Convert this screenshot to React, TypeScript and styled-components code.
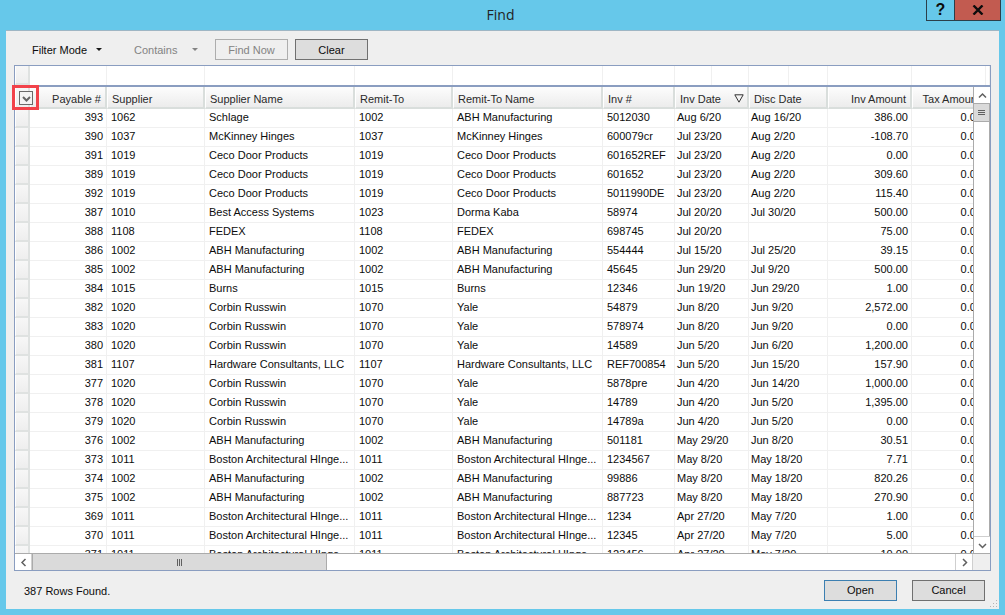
import styled, { createGlobalStyle } from "styled-components";

const GlobalStyle = createGlobalStyle`
  html, body {
    margin: 0;
    padding: 0;
    background: #66c8ea;
    font-family: "Liberation Sans", Arial, sans-serif;
    font-size: 11px;
    color: #0c0c0c;
  }
`;

// column widths, row header first
const COLUMNS = "15px 77px 98px 150px 98px 150px 72px 74px 79px 84px 74px";
const FILTER_COLUMNS = "15px 77px 98px 150px 98px 150px 72px 37px 37px 40px 39px 84px 74px 1fr";

const Window = styled.div`
  width: 1005px;
  height: 615px;
  display: flex;
  flex-direction: column;
  overflow: hidden;
`;

const TitleBar = styled.div`
  height: 30px;
  flex: none;
  display: grid;
  grid-template-columns: 1fr auto 1fr;
  padding-right: 4px;
`;

const Title = styled.div`
  grid-column: 2;
  font-family: "Open Sans", sans-serif;
  font-size: 14px;
  line-height: 29px;
  color: #222;
`;

const CaptionButtons = styled.div`
  grid-column: 3;
  justify-self: end;
  display: flex;
  height: 21px;
`;

const CaptionButton = styled.div<{ $close?: boolean }>`
  box-sizing: border-box;
  width: ${(p) => (p.$close ? "47px" : "29px")};
  height: 21px;
  margin-left: ${(p) => (p.$close ? "-1px" : "0")};
  display: flex;
  align-items: center;
  justify-content: center;
  border: 1px solid #2b3f4a;
  border-top: none;
  background: ${(p) => (p.$close ? "#c25b50" : "transparent")};
  font-size: 16px;
  font-weight: bold;
  color: #0c0c0c;
`;

const Client = styled.div`
  flex: 1;
  margin: 0 6px 6px;
  background: #efefef;
  border-top: 1px solid #9fb6c4;
  display: flex;
  flex-direction: column;
  padding: 0 8px;
  position: relative;
`;

const Toolbar = styled.div`
  height: 34px;
  flex: none;
  display: flex;
  align-items: center;
  padding: 3px 0 0 18px;
  box-sizing: border-box;
`;

const ToolLabel = styled.div<{ $disabled?: boolean; $width: number }>`
  width: ${(p) => p.$width}px;
  display: flex;
  align-items: center;
  color: ${(p) => (p.$disabled ? "#838383" : "#0c0c0c")};
`;

const Caret = styled.span<{ $disabled?: boolean; $gap: number }>`
  width: 0;
  height: 0;
  margin-left: ${(p) => p.$gap}px;
  border-left: 3px solid transparent;
  border-right: 3px solid transparent;
  border-top: 3px solid ${(p) => (p.$disabled ? "#838383" : "#1a1a1a")};
`;

const ToolButton = styled.div<{ $disabled?: boolean }>`
  box-sizing: border-box;
  width: 73px;
  height: 21px;
  margin-right: 7px;
  display: flex;
  align-items: center;
  justify-content: center;
  border: 1px solid ${(p) => (p.$disabled ? "#adadad" : "#707070")};
  background: ${(p) => (p.$disabled ? "#efefef" : "#dddddd")};
  color: ${(p) => (p.$disabled ? "#838383" : "#0c0c0c")};
`;

const GridBox = styled.div`
  box-sizing: border-box;
  height: 506px;
  flex: none;
  border: 1px solid #8a9dc0;
  background: #fff;
  position: relative;
  display: flex;
  flex-direction: column;
`;

const FilterRow = styled.div`
  height: 19px;
  flex: none;
  display: grid;
  grid-template-columns: ${FILTER_COLUMNS};
  border-bottom: 2px solid #8a9dc0;
`;

const FilterCell = styled.div`
  border-right: 1px solid #f0f0f0;
`;

const RowHead = styled.div`
  box-sizing: border-box;
  background: linear-gradient(#f7f7f7, #eeeeee);
  border-left: 1px solid #fff;
  border-right: 2px solid #dfe2e1;
  border-bottom: 2px solid #dfe2e1;
`;

const Middle = styled.div`
  flex: 1;
  min-height: 0;
  display: flex;
`;

const MainPane = styled.div`
  width: 958px;
  overflow: hidden;
  display: flex;
  flex-direction: column;
`;

const HeaderRow = styled.div`
  height: 22px;
  flex: none;
  display: grid;
  grid-template-columns: ${COLUMNS};
`;

const HeaderCorner = styled(RowHead)`
  display: flex;
  align-items: center;
  justify-content: center;
`;

const SelectBox = styled.div`
  box-sizing: border-box;
  position: relative;
  z-index: 1;
  flex: none;
  width: 14px;
  height: 14px;
  margin: 1px 0 0 8px;
  border: 1px solid #6a6a6a;
  background: #f4f4f4;
  display: flex;
  align-items: center;
  justify-content: center;
  padding-top: 2px;
`;

const HeaderCell = styled.div<{ $right?: boolean }>`
  box-sizing: border-box;
  position: relative;
  display: flex;
  align-items: center;
  justify-content: ${(p) => (p.$right ? "flex-end" : "flex-start")};
  padding: 3px ${(p) => (p.$right ? "4px" : "0")} 0 ${(p) => (p.$right ? "0" : "4px")};
  background: linear-gradient(#fdfdfd, #ececec);
  border-left: 1px solid #fff;
  border-right: 2px solid #d9dedc;
  border-bottom: 2px solid #d9dedc;
  color: #2a2a2a;
  white-space: nowrap;
`;

const SortMark = styled.svg`
  position: absolute;
  right: 3px;
  top: 7px;
`;

const Rows = styled.div`
  flex: 1;
  min-height: 0;
  overflow: hidden;
`;

const Row = styled.div`
  height: 19px;
  display: grid;
  grid-template-columns: ${COLUMNS};
`;

const Cell = styled.div<{ $right?: boolean; $date?: boolean }>`
  box-sizing: border-box;
  line-height: 17px;
  padding: 0 ${(p) => (p.$right ? "3px" : "0")} 0 ${(p) => (p.$right ? "0" : p.$date ? "2px" : "4px")};
  text-align: ${(p) => (p.$right ? "right" : "left")};
  border-right: 1px solid #f0f0f0;
  border-bottom: 1px solid #f0f0f0;
  white-space: nowrap;
  overflow: hidden;
`;

const VScroll = styled.div`
  width: 17px;
  flex: none;
  box-sizing: border-box;
  border-left: 1px solid #ababab;
  border-right: 1px solid #ababab;
  display: flex;
  flex-direction: column;
  background: #fff;
`;

const ArrowButton = styled.div<{ $edge?: "top" | "bottom" | "left" | "right" }>`
  flex: none;
  width: 16px;
  height: 16px;
  display: flex;
  align-items: center;
  justify-content: center;
  background: #fff;
  ${(p) => (p.$edge === "bottom" ? "border-top: 1px solid #cfcfcf; margin-top: auto;" : "")}
  ${(p) => (p.$edge === "left" ? "border-right: 1px solid #cfcfcf;" : "")}
  ${(p) => (p.$edge === "right" ? "border-left: 1px solid #cfcfcf; border-right: 1px solid #cfcfcf; margin-left: auto;" : "")}
`;

const VThumb = styled.div`
  box-sizing: border-box;
  flex: none;
  height: 19px;
  background: #dadada;
  border-top: 1px solid #ababab;
  border-bottom: 1px solid #ababab;
  display: flex;
  flex-direction: column;
  align-items: center;
  justify-content: center;
  gap: 1px;
`;

const GripLine = styled.span`
  width: 7px;
  height: 1px;
  background: #606060;
`;

const HScrollRow = styled.div`
  height: 17px;
  flex: none;
  display: flex;
  box-sizing: border-box;
  border-top: 1px solid #ababab;
`;

const HTrack = styled.div`
  width: 958px;
  display: flex;
  background: #fff;
`;

const HThumb = styled.div`
  box-sizing: border-box;
  flex: none;
  width: 295px;
  background: #dadada;
  border-left: 1px solid #ababab;
  border-right: 1px solid #ababab;
  display: flex;
  align-items: center;
  justify-content: center;
  gap: 1px;
`;

const HGripLine = styled.span`
  width: 1px;
  height: 7px;
  background: #606060;
`;

const Corner = styled.div`
  flex: 1;
  background: #efefef;
`;

const Highlight = styled.div`
  position: absolute;
  z-index: 2;
  left: -3px;
  top: 19px;
  box-sizing: border-box;
  width: 27px;
  height: 25px;
  border: 3px solid #f2424a;
  pointer-events: none;
`;

const Footer = styled.div`
  flex: 1;
  display: flex;
  align-items: center;
  padding: 0 6px 0 10px;
`;

const Status = styled.div`
  flex: 1;
  padding-top: 1px;
`;

const FooterButton = styled.div<{ $primary?: boolean }>`
  box-sizing: border-box;
  width: 73px;
  height: 21px;
  margin-left: 15px;
  display: flex;
  align-items: center;
  justify-content: center;
  background: #dddddd;
  border: 1px solid ${(p) => (p.$primary ? "#3c7fb1" : "#707070")};
`;

const ResizeGrip = styled.svg`
  position: absolute;
  right: 1px;
  bottom: 1px;
`;

const Chevron = ({ dir, color = "#606060", width = 1.5 }: { dir: "up" | "down" | "left" | "right"; color?: string; width?: number }) => {
  const points = {
    up: "1,6.5 4.5,3 8,6.5",
    down: "1,3 4.5,6.5 8,3",
    left: "6.5,1 3,4.5 6.5,8",
    right: "3,1 6.5,4.5 3,8",
  }[dir];
  return (
    <svg width="9" height="9" viewBox="0 0 9 9">
      <polyline points={points} fill="none" stroke={color} strokeWidth={width} />
    </svg>
  );
};

const headers = [
  { label: "Payable #", right: true },
  { label: "Supplier" },
  { label: "Supplier Name" },
  { label: "Remit-To" },
  { label: "Remit-To Name" },
  { label: "Inv #" },
  { label: "Inv Date", sort: true },
  { label: "Disc Date" },
  { label: "Inv Amount", right: true },
  { label: "Tax Amount", right: true },
];

const ABH = "ABH Manufacturing";
const CECO = "Ceco Door Products";
const CORBIN = "Corbin Russwin";
const BOSTON = "Boston Architectural HInge...";

const data: string[][] = [
  ["393", "1062", "Schlage", "1002", ABH, "5012030", "Aug 6/20", "Aug 16/20", "386.00"],
  ["390", "1037", "McKinney Hinges", "1037", "McKinney Hinges", "600079cr", "Jul 23/20", "Aug 2/20", "-108.70"],
  ["391", "1019", CECO, "1019", CECO, "601652REF", "Jul 23/20", "Aug 2/20", "0.00"],
  ["389", "1019", CECO, "1019", CECO, "601652", "Jul 23/20", "Aug 2/20", "309.60"],
  ["392", "1019", CECO, "1019", CECO, "5011990DE", "Jul 23/20", "Aug 2/20", "115.40"],
  ["387", "1010", "Best Access Systems", "1023", "Dorma Kaba", "58974", "Jul 20/20", "Jul 30/20", "500.00"],
  ["388", "1108", "FEDEX", "1108", "FEDEX", "698745", "Jul 20/20", "", "75.00"],
  ["386", "1002", ABH, "1002", ABH, "554444", "Jul 15/20", "Jul 25/20", "39.15"],
  ["385", "1002", ABH, "1002", ABH, "45645", "Jun 29/20", "Jul 9/20", "500.00"],
  ["384", "1015", "Burns", "1015", "Burns", "12346", "Jun 19/20", "Jun 29/20", "1.00"],
  ["382", "1020", CORBIN, "1070", "Yale", "54879", "Jun 8/20", "Jun 9/20", "2,572.00"],
  ["383", "1020", CORBIN, "1070", "Yale", "578974", "Jun 8/20", "Jun 9/20", "0.00"],
  ["380", "1020", CORBIN, "1070", "Yale", "14589", "Jun 5/20", "Jun 6/20", "1,200.00"],
  ["381", "1107", "Hardware Consultants, LLC", "1107", "Hardware Consultants, LLC", "REF700854", "Jun 5/20", "Jun 15/20", "157.90"],
  ["377", "1020", CORBIN, "1070", "Yale", "5878pre", "Jun 4/20", "Jun 14/20", "1,000.00"],
  ["378", "1020", CORBIN, "1070", "Yale", "14789", "Jun 4/20", "Jun 5/20", "1,395.00"],
  ["379", "1020", CORBIN, "1070", "Yale", "14789a", "Jun 4/20", "Jun 5/20", "0.00"],
  ["376", "1002", ABH, "1002", ABH, "501181", "May 29/20", "Jun 8/20", "30.51"],
  ["373", "1011", BOSTON, "1011", BOSTON, "1234567", "May 8/20", "May 18/20", "7.71"],
  ["374", "1002", ABH, "1002", ABH, "99886", "May 8/20", "May 18/20", "820.26"],
  ["375", "1002", ABH, "1002", ABH, "887723", "May 8/20", "May 18/20", "270.90"],
  ["369", "1011", BOSTON, "1011", BOSTON, "1234", "Apr 27/20", "May 7/20", "1.00"],
  ["370", "1011", BOSTON, "1011", BOSTON, "12345", "Apr 27/20", "May 7/20", "5.00"],
  ["371", "1011", BOSTON, "1011", BOSTON, "123456", "Apr 27/20", "May 7/20", "10.00"],
];

const filterCells = Array.from({ length: 13 });

const App = () => {
  return (
    <Window>
      <GlobalStyle />
      <TitleBar>
        <Title>Find</Title>
        <CaptionButtons>
          <CaptionButton>?</CaptionButton>
          <CaptionButton $close>
            <svg width="12" height="10" viewBox="0 0 12 10">
              <path d="M1.5 0.5 L10.5 9.5 M10.5 0.5 L1.5 9.5" stroke="#0c0c0c" strokeWidth="2.4" fill="none" />
            </svg>
          </CaptionButton>
        </CaptionButtons>
      </TitleBar>
      <Client>
        <Toolbar>
          <ToolLabel $width={102}>
            Filter Mode <Caret $gap={9} />
          </ToolLabel>
          <ToolLabel $width={81} $disabled>
            Contains <Caret $gap={15} $disabled />
          </ToolLabel>
          <ToolButton $disabled>Find Now</ToolButton>
          <ToolButton>Clear</ToolButton>
        </Toolbar>
        <GridBox>
          <FilterRow>
            <RowHead />
            {filterCells.map((_, i) => (
              <FilterCell key={i} />
            ))}
          </FilterRow>
          <Middle>
            <MainPane>
              <HeaderRow>
                <HeaderCorner>
                  <SelectBox>
                    <Chevron dir="down" color="#666" width={2} />
                  </SelectBox>
                </HeaderCorner>
                {headers.map((h) => (
                  <HeaderCell key={h.label} $right={h.right}>
                    {h.label}
                    {h.sort && (
                      <SortMark width="10" height="9" viewBox="0 0 10 9">
                        <path d="M0.8 0.8 H9.2 L5 8.2 Z" fill="none" stroke="#333" strokeWidth="1" />
                      </SortMark>
                    )}
                  </HeaderCell>
                ))}
              </HeaderRow>
              <Rows>
                {data.map((row) => (
                  <Row key={row[0]}>
                    <RowHead />
                    {row.map((value, i) => (
                      <Cell key={i} $right={i === 0 || i === 8} $date={i === 6 || i === 7}>
                        {value}
                      </Cell>
                    ))}
                    <Cell $right>0.00</Cell>
                  </Row>
                ))}
              </Rows>
            </MainPane>
            <VScroll>
              <ArrowButton>
                <Chevron dir="up" />
              </ArrowButton>
              <VThumb>
                <GripLine />
                <GripLine />
                <GripLine />
              </VThumb>
              <ArrowButton $edge="bottom">
                <Chevron dir="down" />
              </ArrowButton>
            </VScroll>
          </Middle>
          <HScrollRow>
            <HTrack>
              <ArrowButton $edge="left">
                <Chevron dir="left" />
              </ArrowButton>
              <HThumb>
                <HGripLine />
                <HGripLine />
                <HGripLine />
              </HThumb>
              <ArrowButton $edge="right">
                <Chevron dir="right" />
              </ArrowButton>
            </HTrack>
            <Corner />
          </HScrollRow>
          <Highlight />
        </GridBox>
        <Footer>
          <Status>387 Rows Found.</Status>
          <FooterButton $primary>Open</FooterButton>
          <FooterButton>Cancel</FooterButton>
        </Footer>
        <ResizeGrip width="8" height="8" viewBox="0 0 8 8">
          <path d="M6 0h1v1H6zM3 3h1v1H3zM6 3h1v1H6zM0 6h1v1H0zM3 6h1v1H3zM6 6h1v1H6z" fill="#b5b5b5" />
        </ResizeGrip>
      </Client>
    </Window>
  );
};

export default App;
